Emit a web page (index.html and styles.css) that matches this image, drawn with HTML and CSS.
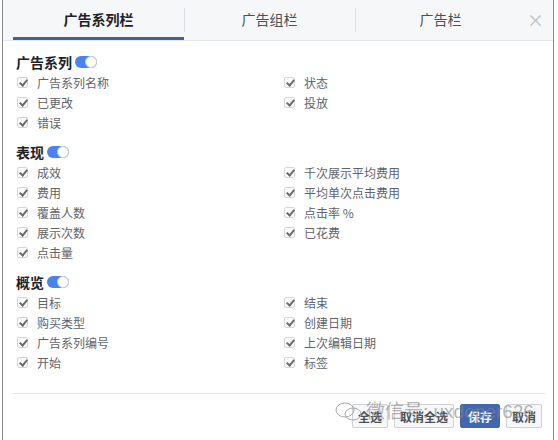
FILE: index.html
```html
<!DOCTYPE html>
<html lang="zh-CN">
<head>
    <meta charset="UTF-8">
    <title>自定义列</title>
    <link rel="stylesheet" href="styles.css">
</head>
<body>
    <div class="dialog">
        <div class="tabs">
            <div class="tab active">广告系列栏</div>
            <div class="tab">广告组栏</div>
            <div class="tab">广告栏</div>
            <div class="close">×</div>
        </div>
        <div class="content">
            <div class="section">
                <div class="section-title">广告系列 <span class="toggle"></span></div>
                <div class="grid">
                    <label class="item"><span class="check"></span>广告系列名称</label>
                    <label class="item"><span class="check"></span>状态</label>
                    <label class="item"><span class="check"></span>已更改</label>
                    <label class="item"><span class="check"></span>投放</label>
                    <label class="item"><span class="check"></span>错误</label>
                </div>
            </div>
            <div class="section">
                <div class="section-title">表现 <span class="toggle"></span></div>
                <div class="grid">
                    <label class="item"><span class="check"></span>成效</label>
                    <label class="item"><span class="check"></span>千次展示平均费用</label>
                    <label class="item"><span class="check"></span>费用</label>
                    <label class="item"><span class="check"></span>平均单次点击费用</label>
                    <label class="item"><span class="check"></span>覆盖人数</label>
                    <label class="item"><span class="check"></span>点击率 %</label>
                    <label class="item"><span class="check"></span>展示次数</label>
                    <label class="item"><span class="check"></span>已花费</label>
                    <label class="item"><span class="check"></span>点击量</label>
                </div>
            </div>
            <div class="section">
                <div class="section-title">概览 <span class="toggle"></span></div>
                <div class="grid">
                    <label class="item"><span class="check"></span>目标</label>
                    <label class="item"><span class="check"></span>结束</label>
                    <label class="item"><span class="check"></span>购买类型</label>
                    <label class="item"><span class="check"></span>创建日期</label>
                    <label class="item"><span class="check"></span>广告系列编号</label>
                    <label class="item"><span class="check"></span>上次编辑日期</label>
                    <label class="item"><span class="check"></span>开始</label>
                    <label class="item"><span class="check"></span>标签</label>
                </div>
            </div>
        </div>
        <div class="footer">
            <button class="btn">全选</button>
            <button class="btn">取消全选</button>
            <button class="btn primary">保存</button>
            <button class="btn">取消</button>
            <div class="watermark">
                <svg width="28" height="20" viewBox="0 0 28 20"><ellipse cx="10" cy="8" rx="9" ry="7" fill="none" stroke="#aaa" stroke-width="1"/><ellipse cx="18" cy="12" rx="8" ry="6" fill="none" stroke="#aaa" stroke-width="1"/></svg>
                <span>微信号: uxdoper626</span>
            </div>
        </div>
    </div>
</body>
</html>
```
FILE: styles.css
```css
body {
    margin: 0;
    background: #fff;
    font-family: "Noto Sans CJK SC", "Noto Sans", sans-serif;
}
.dialog {
    width: 552px;
    height: 440px;
    margin-left: 2px;
    border-left: 1px solid #8a8a8a;
    border-right: 1px solid #8a8a8a;
    box-sizing: border-box;
    position: relative;
}
.tabs {
    display: flex;
    height: 41px;
    padding-left: 10px;
    background: #f6f7f9;
    border-bottom: 1px solid #e6e7ea;
    box-sizing: border-box;
}
.tab {
    width: 171px;
    font-size: 14px;
    color: #4b4f56;
    text-align: center;
    line-height: 38px;
    position: relative;
    box-sizing: border-box;
}
.tab + .tab:before {
    content: "";
    position: absolute;
    left: 0;
    top: 8px;
    height: 24px;
    border-left: 1px solid #dcdee3;
}
.tab.active {
    font-weight: bold;
    color: #1d2129;
    border-bottom: 3px solid #44609c;
}
.close {
    flex: 1;
    text-align: center;
    color: #b8bbc0;
    font-size: 17px;
    line-height: 40px;
    padding-right: 8px;
}
.content {
    padding: 11px 13px 0 13px;
    height: 353px;
    box-sizing: border-box;
    border-bottom: 1px solid #e3e3e3;
    margin: 0 8px 0 10px;
    padding-left: 3px;
}
.section {
    margin-bottom: 10px;
}
.section-title {
    display: flex;
    align-items: center;
    font-size: 14px;
    font-weight: bold;
    color: #1d2129;
    height: 20px;
    gap: 3px;
}
.toggle {
    display: inline-block;
    width: 22px;
    height: 12px;
    border-radius: 6px;
    background: #4a83f0;
    position: relative;
}
.toggle:after {
    content: "";
    position: absolute;
    right: 0;
    top: 0;
    width: 12px;
    height: 12px;
    border-radius: 50%;
    background: #fff;
    border: 1px solid #d0d0d0;
    box-sizing: border-box;
}
.grid {
    display: grid;
    grid-template-columns: 267px 1fr;
}
.item {
    display: flex;
    align-items: center;
    height: 20px;
    font-size: 12px;
    color: #60646a;
    padding-left: 1px;
}
.check {
    width: 11px;
    height: 11px;
    border: 1px solid #d6d6d6;
    border-radius: 2px;
    box-sizing: border-box;
    margin-right: 9px;
    position: relative;
    background: #fafafa;
}
.check:after {
    content: "";
    position: absolute;
    left: 3px;
    top: 0px;
    width: 3px;
    height: 6px;
    border-right: 2px solid #6b6b6b;
    border-bottom: 2px solid #6b6b6b;
    transform: rotate(40deg);
}
.footer {
    display: flex;
    justify-content: flex-end;
    gap: 6px;
    padding: 10px 11px 0 0;
    position: relative;
}
.btn {
    height: 24px;
    padding: 0 5px;
    font-family: "Noto Sans CJK SC", sans-serif;
    font-size: 12px;
    font-weight: bold;
    color: #4b4f56;
    background: #f6f7f9;
    border: 1px solid #ced0d4;
    border-radius: 2px;
}
.btn.primary {
    background: #4267b2;
    border-color: #4267b2;
    color: #fff;
    padding: 0 7px;
}
.watermark {
    position: absolute;
    left: 332px;
    top: 7px;
    display: flex;
    align-items: center;
    gap: 3px;
    color: rgba(130, 130, 130, 0.6);
    font-size: 19px;
    line-height: 22px;
    font-family: "Liberation Sans", "Noto Sans CJK SC", sans-serif;
    pointer-events: none;
}
```
